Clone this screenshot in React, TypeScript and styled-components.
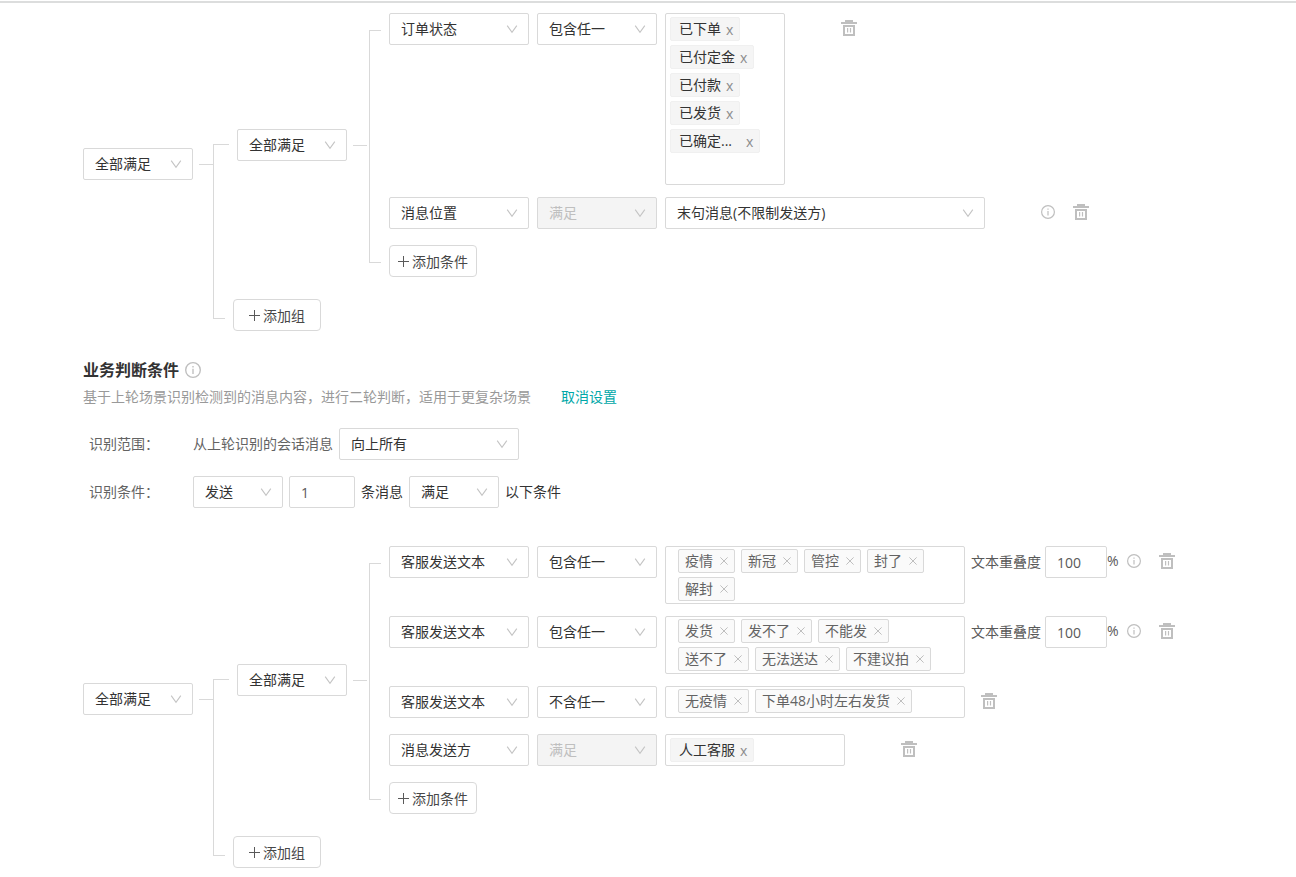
import React from "react";
import styled, { createGlobalStyle } from "styled-components";

const line = "#d9d9d9";

const GlobalStyle = createGlobalStyle`
  *, *::before, *::after { box-sizing: border-box; }
  body {
    margin: 0;
    background: #fff;
    color: #333;
    font: 14px/22px "Open Sans", "Noto Sans CJK SC", sans-serif;
  }
  button, input, select { font: inherit; color: inherit; margin: 0; }
`;

const Page = styled.main`
  padding-top: 1px;
`;

const TopRule = styled.div`
  height: 2px;
  background: #dcdddd;
`;

const Content = styled.div`
  padding: 10px 83px 8px;
`;

/* ---------- form controls ---------- */

const SelectBox = styled.span<{ $width: number }>`
  flex: none;
  display: inline-grid;
  grid-template-columns: 1fr;
  align-items: center;
  width: ${(p) => p.$width}px;
  height: 32px;

  > * { grid-area: 1 / 1; }
  > svg { justify-self: end; margin-right: 11px; pointer-events: none; }
`;

const NativeSelect = styled.select`
  appearance: none;
  width: 100%;
  height: 32px;
  padding: 0 28px 0 11px;
  border: 1px solid ${line};
  border-radius: 2px;
  background: #fff;
  outline: none;

  &:disabled {
    background: #f4f4f4;
    color: #bfbfbf;
    opacity: 1;
  }
`;

const Chevron = () => (
  <svg width="12" height="12" viewBox="0 0 12 12" fill="none" stroke="#c4c4c4" strokeWidth="1.1">
    <path d="M1.2 2.6 6 9.200l4.800-6.600" />
  </svg>
);

function Select(props: { label: string; value: string; width: number; disabled?: boolean }) {
  return (
    <SelectBox $width={props.width}>
      <NativeSelect aria-label={props.label} disabled={props.disabled} defaultValue={props.value}>
        <option>{props.value}</option>
      </NativeSelect>
      <Chevron />
    </SelectBox>
  );
}

const TextInput = styled.input<{ $width: number }>`
  flex: none;
  width: ${(p) => p.$width}px;
  height: 32px;
  padding: 0 11px;
  border: 1px solid ${line};
  border-radius: 2px;
  background: #fff;
  color: #595959;
  outline: none;
`;

const IconButton = styled.button`
  display: flex;
  padding: 0;
  border: 0;
  background: none;
  color: #bfbfbf;
  cursor: pointer;
`;

const AddButton = styled.button`
  display: flex;
  align-items: center;
  justify-content: center;
  gap: 3px;
  width: 88px;
  height: 32px;
  padding: 1px 0 0;
  border: 1px solid ${line};
  border-radius: 4px;
  background: #fff;
  color: #484848;
  cursor: pointer;
`;

const Plus = () => (
  <svg width="11" height="11" viewBox="0 0 11 11" stroke="#595959">
    <path d="M5.5 0v11M0 5.5h11" />
  </svg>
);

function InfoButton({ size = 14 }: { size?: number }) {
  return (
    <IconButton type="button" aria-label="说明">
      <svg width={size} height={size} viewBox="0 0 14 14" fill="none" stroke="currentColor">
        <circle cx="7" cy="7" r="6.4" strokeWidth="1.2" />
        <path d="M7 6v4.4M7 3.5v1.3" strokeWidth="1.2" />
      </svg>
    </IconButton>
  );
}

function TrashButton() {
  return (
    <IconButton type="button" aria-label="删除">
      <svg width="16" height="16" viewBox="0 0 16 16" fill="currentColor">
        <path d="M4 0h8v2h4v2H0V2h4z" />
        <path fillRule="evenodd" d="M2 5h12v11H2zm2 2v7h8V7z" />
        <path d="M6 8h1.200v4.500H6zM8.900 8h1.200v4.500H8.900z" />
      </svg>
    </IconButton>
  );
}

/* ---------- tags ---------- */

const ChoiceBox = styled.div<{ $width: number; $height: number }>`
  flex: none;
  display: flex;
  flex-wrap: wrap;
  align-content: flex-start;
  gap: 4px;
  width: ${(p) => p.$width}px;
  min-height: ${(p) => p.$height}px;
  padding: 3px 4px;
  border: 1px solid ${line};
  border-radius: 2px;
`;

const Choice = styled.span`
  display: flex;
  align-items: center;
  height: 24px;
  padding: 0 6px 0 8px;
  border: 1px solid #f0f0f0;
  border-radius: 2px;
  background: #f5f5f5;
`;

const ChoiceText = styled.span<{ $clipped: boolean }>`
  width: ${(p) => (p.$clipped ? "62px" : "auto")};
`;

const ChoiceRemove = styled.button`
  height: 22px;
  padding: 2px 0 0 5px;
  border: 0;
  background: none;
  color: #8c8c8c;
  line-height: 20px;
  cursor: pointer;
`;

function Choices(props: { items: string[]; width: number; height?: number }) {
  return (
    <ChoiceBox $width={props.width} $height={props.height ?? 32}>
      {props.items.map((item) => (
        <Choice key={item}>
          <ChoiceText $clipped={item.endsWith("...")}>{item}</ChoiceText>
          <ChoiceRemove type="button" aria-label={`移除${item}`}>x</ChoiceRemove>
        </Choice>
      ))}
    </ChoiceBox>
  );
}

const KeywordBox = styled.div`
  flex: none;
  display: flex;
  flex-wrap: wrap;
  align-content: flex-start;
  gap: 4px 6px;
  width: 300px;
  min-height: 32px;
  padding: 2px 12px;
  border: 1px solid ${line};
  border-radius: 2px;
`;

const Keyword = styled.span`
  display: flex;
  align-items: center;
  gap: 7px;
  height: 24px;
  padding: 0 6px;
  border: 1px solid ${line};
  border-radius: 2px;
  background: #fafafa;
  color: #636363;
`;

function Keywords({ items }: { items: string[] }) {
  return (
    <KeywordBox>
      {items.map((item) => (
        <Keyword key={item}>
          {item}
          <IconButton type="button" aria-label={`移除${item}`}>
            <svg width="8" height="8" viewBox="0 0 8 8" stroke="currentColor">
              <path d="M.4.4l7.2 7.200M7.600.4.4 7.600" />
            </svg>
          </IconButton>
        </Keyword>
      ))}
    </KeywordBox>
  );
}

/* ---------- condition tree ---------- */

const Tree = styled.section`
  display: flex;
  align-items: center;
`;

const Root = styled.div`
  flex: none;
  display: flex;
  align-items: center;
  margin-bottom: 16px;
`;

const Stub = styled.i`
  flex: none;
  width: 14px;
  height: 2px;
  margin-left: 6px;
  border-bottom: 1px solid ${line};
`;

const Branches = styled.div`
  display: grid;
  grid-template-columns: 16px auto;
`;

const UpperBranch = styled.div`
  display: flex;
  flex-direction: column;

  &::before { content: ""; flex: 1; }
  &::after {
    content: "";
    flex: 1;
    margin-top: -1px;
    border: solid ${line};
    border-width: 1px 0 0 1px;
  }
`;

const LowerBranch = styled.div`
  width: 12px;
  margin-bottom: 12px;
  border: solid ${line};
  border-width: 0 0 1px 1px;
`;

const Group = styled.div`
  display: flex;
  align-items: center;
  padding-left: 8px;
`;

const AddGroup = styled.div`
  padding: 22px 0 0 4px;
`;

const Bracket = styled.div`
  flex: none;
  align-self: stretch;
  width: 12px;
  margin: 17px 8px 14px 2px;
  border: solid ${line};
  border-width: 1px 0 1px 1px;
`;

const Conditions = styled.div`
  display: flex;
  flex-direction: column;
  gap: 12px;
`;

const Condition = styled.div`
  display: flex;
  align-items: flex-start;
  gap: 8px;
  min-height: 36px;
`;

const Value = styled.div`
  display: flex;
  align-items: flex-start;
`;

const Actions = styled.div<{ $offset: number }>`
  display: flex;
  align-items: center;
  gap: 18px;
  height: 30px;
  margin-left: ${(p) => p.$offset}px;
`;

const Overlap = styled.label`
  display: flex;
  align-items: center;
  gap: 4px;
  margin-left: 6px;
  color: #595959;
  white-space: nowrap;
`;

const Percent = styled.span`
  color: #595959;
  line-height: 30px;
`;

function ConditionTree({ children }: { children: React.ReactNode }) {
  return (
    <Tree>
      <Root>
        <Select label="组间关系" value="全部满足" width={110} />
        <Stub />
      </Root>
      <Branches>
        <UpperBranch />
        <Group>
          <Select label="条件关系" value="全部满足" width={110} />
          <Stub />
          <Bracket />
          <Conditions>
            {children}
            <AddButton type="button"><Plus />添加条件</AddButton>
          </Conditions>
        </Group>
        <LowerBranch />
        <AddGroup>
          <AddButton type="button"><Plus />添加组</AddButton>
        </AddGroup>
      </Branches>
    </Tree>
  );
}

function ConditionRow(props: {
  field: string;
  operator: string;
  locked?: boolean;
  children: React.ReactNode;
}) {
  return (
    <Condition>
      <Select label="条件字段" value={props.field} width={140} />
      <Select label="条件运算" value={props.operator} width={120} disabled={props.locked} />
      <Value>{props.children}</Value>
    </Condition>
  );
}

function OverlapRow({ words }: { words: string[] }) {
  return (
    <ConditionRow field="客服发送文本" operator="包含任一">
      <Keywords items={words} />
      <Overlap>
        文本重叠度
        <TextInput $width={62} defaultValue="100" />
      </Overlap>
      <Percent>%</Percent>
      <Actions $offset={8}>
        <InfoButton />
        <TrashButton />
      </Actions>
    </ConditionRow>
  );
}

/* ---------- business rule section ---------- */

const Heading = styled.h2`
  display: flex;
  align-items: center;
  gap: 6px;
  margin: 27px 0 4px;
  font-size: 16px;
  font-weight: 700;
  line-height: 24px;
`;

const Description = styled.p`
  display: flex;
  gap: 30px;
  margin: 0 0 20px;
  color: #999;
`;

const Link = styled.a`
  color: #00a8a8;
  text-decoration: none;
`;

const Settings = styled.div`
  display: flex;
  flex-direction: column;
  gap: 16px;
  margin-bottom: 38px;
  padding-left: 6px;
`;

const Setting = styled.div`
  display: flex;
  align-items: center;
  gap: 6px;
`;

const SettingName = styled.span`
  width: 98px;
  color: #636363;
`;

const Muted = styled.span`
  color: #636363;
`;

export default function App() {
  return (
    <>
      <GlobalStyle />
      <Page>
        <TopRule />
        <Content>
          <ConditionTree>
            <ConditionRow field="订单状态" operator="包含任一">
              <Choices
                width={120}
                height={172}
                items={["已下单", "已付定金", "已付款", "已发货", "已确定..."]}
              />
              <Actions $offset={56}>
                <TrashButton />
              </Actions>
            </ConditionRow>
            <ConditionRow field="消息位置" operator="满足" locked>
              <Select label="消息位置取值" value="末句消息(不限制发送方)" width={320} />
              <Actions $offset={56}>
                <InfoButton />
                <TrashButton />
              </Actions>
            </ConditionRow>
          </ConditionTree>

          <Heading>
            业务判断条件
            <InfoButton size={16} />
          </Heading>
          <Description>
            基于上轮场景识别检测到的消息内容，进行二轮判断，适用于更复杂场景
            <Link href="#">取消设置</Link>
          </Description>

          <Settings>
            <Setting>
              <SettingName>识别范围：</SettingName>
              <Muted>从上轮识别的会话消息</Muted>
              <Select label="识别范围" value="向上所有" width={180} />
            </Setting>
            <Setting>
              <SettingName>识别条件：</SettingName>
              <Select label="消息方向" value="发送" width={90} />
              <TextInput $width={66} aria-label="消息条数" defaultValue="1" />
              <span>条消息</span>
              <Select label="是否满足" value="满足" width={90} />
              <span>以下条件</span>
            </Setting>
          </Settings>

          <ConditionTree>
            <OverlapRow words={["疫情", "新冠", "管控", "封了", "解封"]} />
            <OverlapRow words={["发货", "发不了", "不能发", "送不了", "无法送达", "不建议拍"]} />
            <ConditionRow field="客服发送文本" operator="不含任一">
              <Keywords items={["无疫情", "下单48小时左右发货"]} />
              <Actions $offset={16}>
                <TrashButton />
              </Actions>
            </ConditionRow>
            <ConditionRow field="消息发送方" operator="满足" locked>
              <Choices width={180} items={["人工客服"]} />
              <Actions $offset={56}>
                <TrashButton />
              </Actions>
            </ConditionRow>
          </ConditionTree>
        </Content>
      </Page>
    </>
  );
}
